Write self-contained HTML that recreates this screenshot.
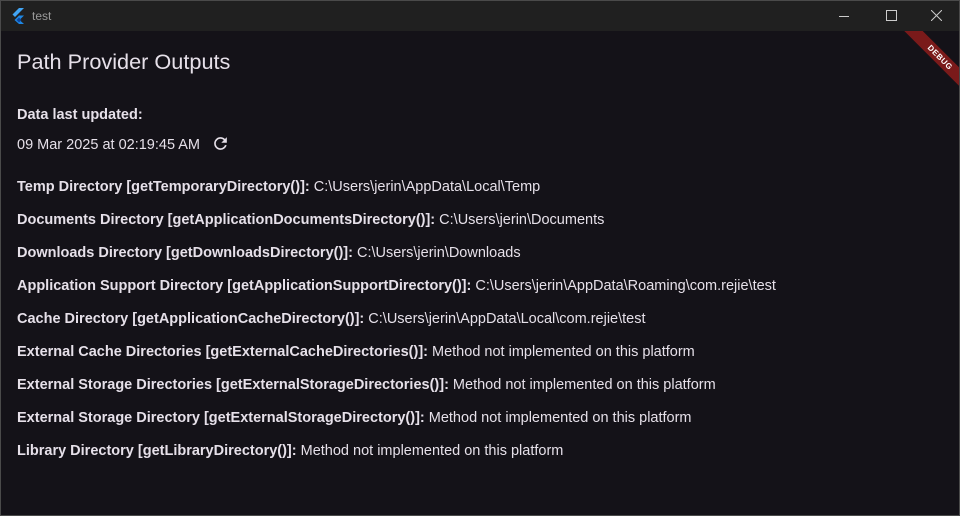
<!DOCTYPE html>
<html><head><style>
html,body{margin:0;padding:0;width:960px;height:516px;overflow:hidden;background:#141218;font-family:"Liberation Sans",sans-serif;color:#e6e0e9}
.frame{position:absolute;left:0;top:0;width:958px;height:514px;border:1px solid #4a4a4a}
.tb{position:absolute;left:1px;top:1px;width:958px;height:30px;background:#202020}
.tb .t{position:absolute;left:31px;top:8px;font-size:12px;color:#9a9a9a}
.c{position:absolute;left:17px;font-size:14.5px;white-space:nowrap}
b{font-weight:bold}
.ban{position:absolute;left:880px;top:31px;width:79px;height:79px;overflow:hidden}
.ban div{position:absolute;left:10px;top:20px;width:100px;height:13px;background:#7a1a1a;transform:rotate(45deg);color:#fff;font-size:8px;font-weight:bold;text-align:center;line-height:13px;letter-spacing:.5px}
</style></head><body>
<div class="frame"></div>
<div class="tb">
<svg style="position:absolute;left:10px;top:7px" width="14" height="16" viewBox="0 0 14 16"><path d="M8 0h5L4 9 1.5 6.5z" fill="#42a5f5"/><path d="M8 7.5h5L8.5 12l4.5 4H8L3.5 12z" fill="#1e88e5"/><path d="M5.5 12 8 9.5 10.5 12 8 14.5z" fill="#0d47a1"/></svg>
<span class="t">test</span>
<div style="position:absolute;left:838px;top:15px;width:10px;height:1px;background:#ccc"></div>
<div style="position:absolute;left:885px;top:9px;width:9px;height:9px;border:1px solid #ccc"></div>
<svg style="position:absolute;left:930px;top:9px" width="11" height="11"><path d="M0 0L11 11M11 0L0 11" stroke="#ccc" stroke-width="1"/></svg>
</div>
<div class="ban"><div>DEBUG</div></div>
<div class="c" style="top:49px;font-size:21.7px">Path Provider Outputs</div>
<div class="c" style="top:107px"><b>Data last updated:</b></div>
<div class="c" style="top:137px">09 Mar 2025 at 02:19:45 AM</div>
<svg style="position:absolute;left:211px;top:134px" width="19" height="19" viewBox="0 0 24 24"><path d="M17.65 6.35A7.96 7.96 0 0 0 12 4a8 8 0 1 0 7.73 10h-2.08A6 6 0 1 1 12 6c1.66 0 3.14.69 4.22 1.78L13 11h7V4z" fill="#e6e0e9"/></svg>
<div class="c" style="top:179px"><b>Temp Directory [getTemporaryDirectory()]:</b> C:\Users\jerin\AppData\Local\Temp</div>
<div class="c" style="top:212px"><b>Documents Directory [getApplicationDocumentsDirectory()]:</b> C:\Users\jerin\Documents</div>
<div class="c" style="top:245px"><b>Downloads Directory [getDownloadsDirectory()]:</b> C:\Users\jerin\Downloads</div>
<div class="c" style="top:278px"><b>Application Support Directory [getApplicationSupportDirectory()]:</b> C:\Users\jerin\AppData\Roaming\com.rejie\test</div>
<div class="c" style="top:311px"><b>Cache Directory [getApplicationCacheDirectory()]:</b> C:\Users\jerin\AppData\Local\com.rejie\test</div>
<div class="c" style="top:344px"><b>External Cache Directories [getExternalCacheDirectories()]:</b> Method not implemented on this platform</div>
<div class="c" style="top:377px"><b>External Storage Directories [getExternalStorageDirectories()]:</b> Method not implemented on this platform</div>
<div class="c" style="top:410px"><b>External Storage Directory [getExternalStorageDirectory()]:</b> Method not implemented on this platform</div>
<div class="c" style="top:443px"><b>Library Directory [getLibraryDirectory()]:</b> Method not implemented on this platform</div>
</body></html>
